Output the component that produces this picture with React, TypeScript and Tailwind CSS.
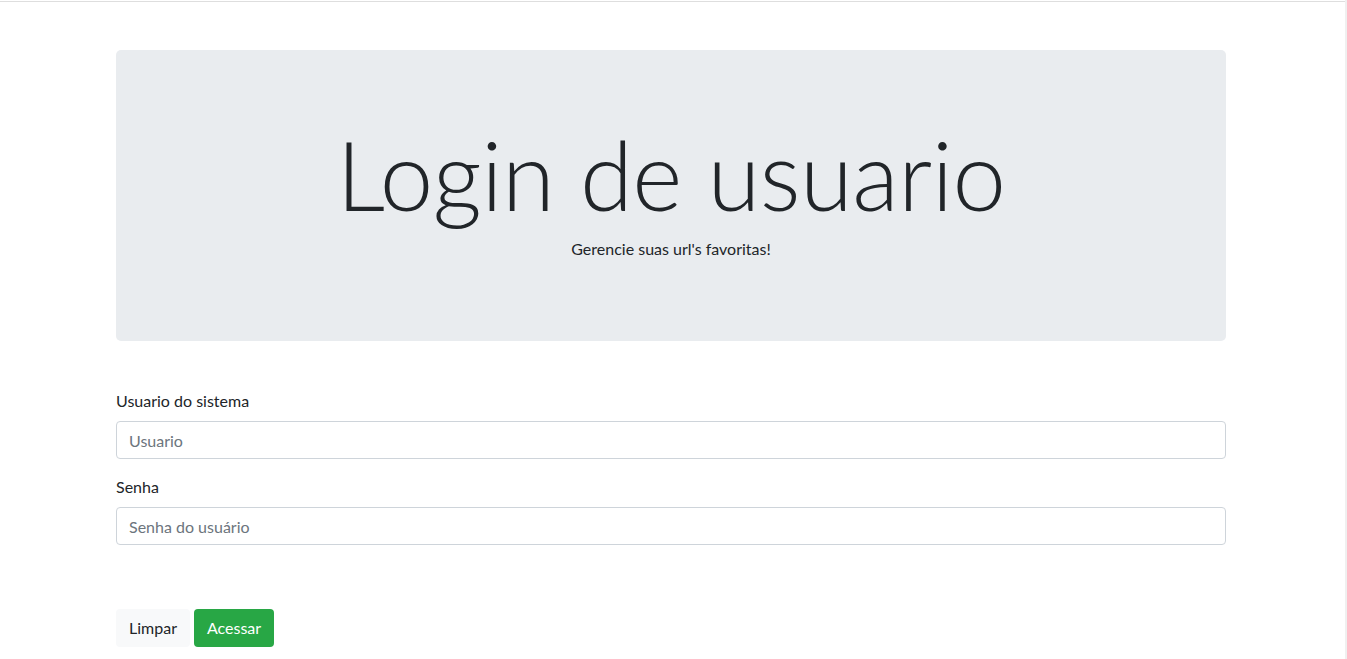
export default function App() {
  return (
    <div className="flex min-h-[659px] w-full bg-white font-['Lato',sans-serif] text-[#212529]">
      <div className="flex-1">
        <div className="mt-px border-t border-[#dedede]" />
        <main className="ml-[116px] w-[1110px] pt-[48px]">
          <section className="flex h-[291px] flex-col items-center rounded-[5px] bg-[#e9ecef] pt-[66px]">
            <h1 className="text-[96px] font-light leading-[115px] tracking-[-0.5px]">Login de usuario</h1>
            <p className="mt-[6px] text-[16px] leading-6">Gerencie suas url's favoritas!</p>
          </section>

          <form className="mt-[48px]">
            <div className="flex flex-col gap-[8px]">
              <label className="text-[16px] leading-6">Usuario do sistema</label>
              <input
                placeholder="Usuario"
                className="h-[38px] rounded-[4px] border border-[#ced4da] px-3 text-[16px] placeholder:text-[#6c757d]"
              />
            </div>
            <div className="mt-[16px] flex flex-col gap-[8px]">
              <label className="text-[16px] leading-6">Senha</label>
              <input
                type="password"
                placeholder="Senha do usuário"
                className="h-[38px] rounded-[4px] border border-[#ced4da] px-3 text-[16px] placeholder:text-[#6c757d]"
              />
            </div>
            <div className="mt-[64px] flex gap-[4px]">
              <button type="button" className="h-[38px] w-[74px] rounded-[4px] bg-[#f8f9fa] text-[16px]">
                Limpar
              </button>
              <button type="button" className="h-[38px] w-[80px] rounded-[4px] bg-[#28a745] text-[16px] text-white">
                Acessar
              </button>
            </div>
          </form>
        </main>
      </div>
      <div className="w-[2px] shrink-0 bg-[#f0f0f0]" />
    </div>
  );
}
